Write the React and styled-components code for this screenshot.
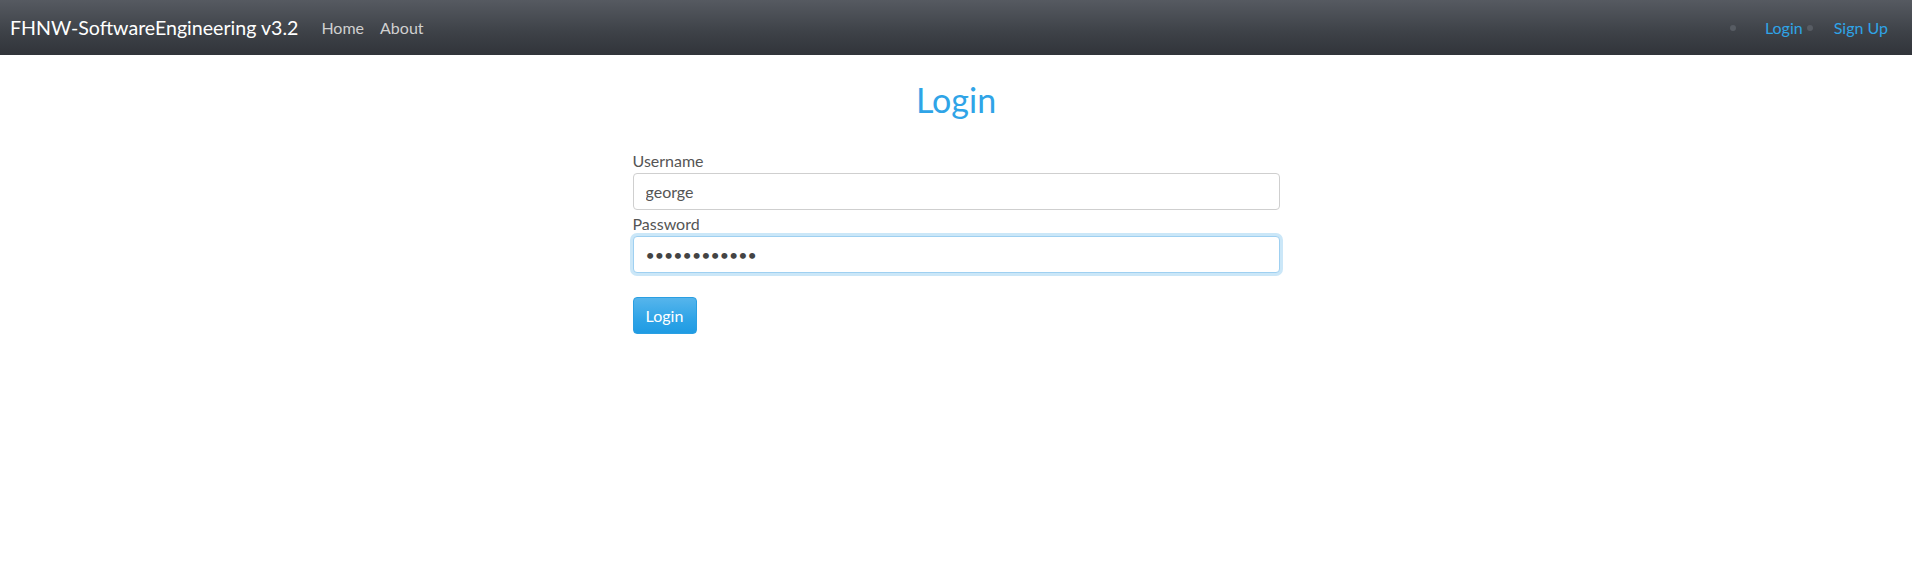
import React from 'react'
import styled, { createGlobalStyle } from 'styled-components'

const GlobalStyle = createGlobalStyle`
body{
  margin: 0;
  background: #fff;
  font-family: Lato, "Open Sans", sans-serif;
  color: #555;
}
`

const NavBar = styled.nav`
height: 55px;
display: flex;
align-items: center;
justify-content: space-between;
padding: 0 24px 0 10px;
background-image: linear-gradient(#565a61, #3d4147 60%, #31343a);
`

const NavLeft = styled.div`
display: flex;
align-items: center;
gap: 16px;
`

const Brand = styled.a`
font-size: 19.6px;
color: #fff;
text-decoration: none;
margin-right: 7px;
`

const NavLink = styled.a`
font-size: 16px;
color: ${props => props.accent ? '#2fa4e7' : '#d0d0d0'};
text-decoration: none;
`

const NavRight = styled.ul`
display: flex;
align-items: center;
list-style: none;
margin: 0;
padding: 0;
`

const NavItem = styled.li`
display: flex;
align-items: center;
margin-left: ${props => props.first ? '0' : '4px'};
`

const Dot = styled.span`
width: 6px;
height: 6px;
border-radius: 50%;
background: #575c63;
margin-right: ${props => props.wide ? '29px' : '21px'};
`

const Main = styled.main`
width: 647px;
margin: 0 auto;
display: flex;
flex-direction: column;
`

const Title = styled.h1`
font-size: 34px;
font-weight: 400;
color: #2fa4e7;
text-align: center;
margin: 26px 0 32px;
line-height: 1.1;
`

const Label = styled.label`
font-size: 16px;
line-height: 22px;
color: #555;
`

const Input = styled.input`
box-sizing: border-box;
height: 37px;
width: 100%;
margin: 1px 0 3px;
padding: 6px 12px;
font-family: Lato, "Open Sans", sans-serif;
font-size: 16px;
color: ${props => props.type === 'password' ? '#444' : '#555'};
background: #fff;
border: 1px solid ${props => props.focused ? '#9fd0f1' : '#cfcfcf'};
border-radius: 4px;
box-shadow: ${props => props.focused ? '0 0 0 3px #cbe7f8' : 'none'};
outline: none;
`

const Button = styled.button`
align-self: flex-start;
margin-top: 21px;
width: 64px;
height: 37px;
box-sizing: border-box;
padding: 0;
font-family: Lato, "Open Sans", sans-serif;
font-size: 16px;
color: #fff;
background-image: linear-gradient(#56b5ec, #2fa4e7 60%, #1f9be3);
border: 1px solid #2a9fe2;
border-radius: 4px;
`

const App = () => {
  return (
    <>
      <GlobalStyle />
      <NavBar>
        <NavLeft>
          <Brand href="#">FHNW-SoftwareEngineering v3.2</Brand>
          <NavLink href="#">Home</NavLink>
          <NavLink href="#">About</NavLink>
        </NavLeft>
        <NavRight>
          <NavItem first>
            <Dot wide />
            <NavLink accent href="#">Login</NavLink>
          </NavItem>
          <NavItem>
            <Dot />
            <NavLink accent href="#">Sign Up</NavLink>
          </NavItem>
        </NavRight>
      </NavBar>
      <Main>
        <Title>Login</Title>
        <Label>Username</Label>
        <Input type="text" defaultValue="george" />
        <Label>Password</Label>
        <Input type="password" defaultValue="george123456" focused />
        <Button>Login</Button>
      </Main>
    </>
  )
}

export default App
